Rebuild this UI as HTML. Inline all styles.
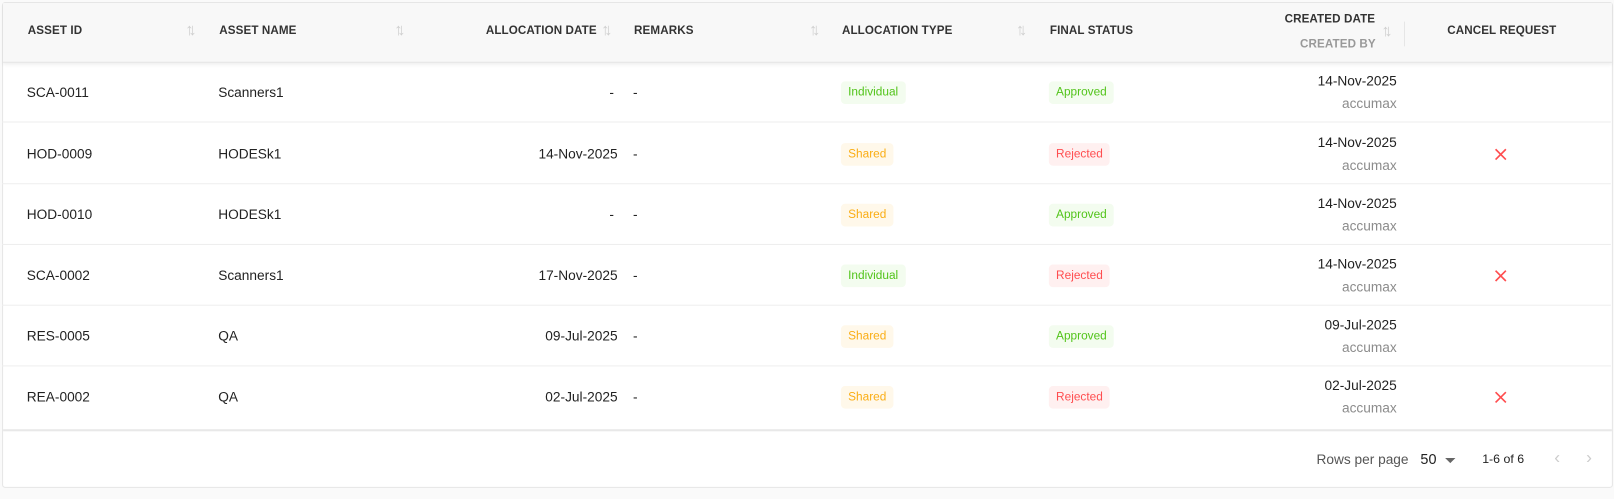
<!DOCTYPE html>
<html><head><meta charset="utf-8"><style>
*{margin:0;padding:0;box-sizing:border-box}
body{width:1614px;height:499px;background:#fafafa;font-family:"Liberation Sans",sans-serif;position:relative;overflow:hidden;color:#222}
#w{position:absolute;left:0;top:0;width:1568px;height:485px;transform:scale(1.0293);transform-origin:0 0}
.card{position:absolute;left:2px;top:2px;width:1565px;height:472px;background:#fff;border:1px solid #e6e6e6;border-radius:3px}
.hd{position:absolute;left:0;top:0;width:1563px;height:58px;background:#f8f8f8;border-bottom:1px solid #e4e4e4;box-shadow:0 2px 3px rgba(0,0,0,.06)}
.h{position:absolute;font-size:11.3px;font-weight:bold;color:#333;letter-spacing:.1px}
.s{position:absolute;font-size:16px;color:#cfcfcf;letter-spacing:-5px}
.row{position:absolute;left:0;width:1563px;height:59px;border-bottom:1px solid #eee}
.t{position:absolute;font-size:13.3px;color:#222}
.b{position:absolute;font-size:11.5px;padding:5px 7px;border-radius:4px;line-height:12px}
.gI{background:#f3fcef;color:#52c41a}
.sh{background:#fff8ea;color:#faad14}
.rj{background:#fff0f0;color:#ff4d4f}
.x{position:absolute;left:1449px;width:14px;height:14px}
.g{color:#8c8c8c}
.ft{position:absolute;left:0;top:414px;width:1563px;height:57px;border-top:2px solid #e8e8e8}
</style></head><body><div id="w">
<div class="card">
<div class="hd">
<div class="h" style="left:24px;top:21px">ASSET ID</div><div class="s" style="left:177px;top:18px">↑↓</div>
<div class="h" style="left:210px;top:21px">ASSET NAME</div><div class="s" style="left:380px;top:18px">↑↓</div>
<div class="h" style="left:469px;top:21px">ALLOCATION DATE</div><div class="s" style="left:581px;top:18px">↑↓</div>
<div class="h" style="left:613px;top:21px">REMARKS</div><div class="s" style="left:783px;top:18px">↑↓</div>
<div class="h" style="left:815px;top:21px">ALLOCATION TYPE</div><div class="s" style="left:984px;top:18px">↑↓</div>
<div class="h" style="left:1017px;top:21px">FINAL STATUS</div>
<div class="h" style="left:1245px;top:10px">CREATED DATE</div>
<div class="h" style="left:1260px;top:34px;color:#999">CREATED BY</div><div class="s" style="left:1339px;top:19px">↑↓</div>
<div style="position:absolute;left:1361px;top:18px;width:1px;height:24px;background:#e6e6e6"></div>
<div class="h" style="left:1403px;top:21px">CANCEL REQUEST</div>
</div>
<div class="ft">
<div class="t" style="left:1276px;top:20px;color:#555">Rows per page</div>
<div class="t" style="left:1377px;top:19px;font-size:14px">50</div>
<div style="position:absolute;left:1401px;top:26px;border-left:5px solid transparent;border-right:5px solid transparent;border-top:5px solid #666"></div>
<div class="t" style="left:1437px;top:20px;font-size:12px">1-6 of 6</div>
<div class="t" style="left:1507px;top:16px;color:#ccc;font-size:17px">‹</div>
<div class="t" style="left:1538px;top:16px;color:#ccc;font-size:17px">›</div>
</div>
</div>
<div style="position:absolute;left:2px;top:2px">
<div class="row" style="top:58px"><div class="t" style="left:24px;top:22px">SCA-0011</div><div class="t" style="left:210px;top:22px">Scanners1</div><div class="t" style="left:590px;top:22px">-</div><div class="t" style="left:613px;top:22px">-</div><div class="b gI" style="left:815px;top:19px">Individual</div><div class="b gI" style="left:1017px;top:19px">Approved</div><div class="t" style="left:1255px;top:11px;width:100px;text-align:right">14-Nov-2025</div><div class="t g" style="left:1255px;top:33px;width:100px;text-align:right">accumax</div></div>
<div class="row" style="top:118px"><div class="t" style="left:24px;top:22px">HOD-0009</div><div class="t" style="left:210px;top:22px">HODESk1</div><div class="t" style="left:495px;top:22px;width:103px;text-align:right">14-Nov-2025</div><div class="t" style="left:613px;top:22px">-</div><div class="b sh" style="left:815px;top:19px">Shared</div><div class="b rj" style="left:1017px;top:19px">Rejected</div><div class="t" style="left:1255px;top:11px;width:100px;text-align:right">14-Nov-2025</div><div class="t g" style="left:1255px;top:33px;width:100px;text-align:right">accumax</div><svg class="x" style="top:23px" viewBox="0 0 14 14"><path d="M2 2L12 12M12 2L2 12" stroke="#ff4d4f" stroke-width="1.6"/></svg></div>
<div class="row" style="top:177px"><div class="t" style="left:24px;top:22px">HOD-0010</div><div class="t" style="left:210px;top:22px">HODESk1</div><div class="t" style="left:590px;top:22px">-</div><div class="t" style="left:613px;top:22px">-</div><div class="b sh" style="left:815px;top:19px">Shared</div><div class="b gI" style="left:1017px;top:19px">Approved</div><div class="t" style="left:1255px;top:11px;width:100px;text-align:right">14-Nov-2025</div><div class="t g" style="left:1255px;top:33px;width:100px;text-align:right">accumax</div></div>
<div class="row" style="top:236px"><div class="t" style="left:24px;top:22px">SCA-0002</div><div class="t" style="left:210px;top:22px">Scanners1</div><div class="t" style="left:495px;top:22px;width:103px;text-align:right">17-Nov-2025</div><div class="t" style="left:613px;top:22px">-</div><div class="b gI" style="left:815px;top:19px">Individual</div><div class="b rj" style="left:1017px;top:19px">Rejected</div><div class="t" style="left:1255px;top:11px;width:100px;text-align:right">14-Nov-2025</div><div class="t g" style="left:1255px;top:33px;width:100px;text-align:right">accumax</div><svg class="x" style="top:23px" viewBox="0 0 14 14"><path d="M2 2L12 12M12 2L2 12" stroke="#ff4d4f" stroke-width="1.6"/></svg></div>
<div class="row" style="top:295px"><div class="t" style="left:24px;top:22px">RES-0005</div><div class="t" style="left:210px;top:22px">QA</div><div class="t" style="left:495px;top:22px;width:103px;text-align:right">09-Jul-2025</div><div class="t" style="left:613px;top:22px">-</div><div class="b sh" style="left:815px;top:19px">Shared</div><div class="b gI" style="left:1017px;top:19px">Approved</div><div class="t" style="left:1255px;top:11px;width:100px;text-align:right">09-Jul-2025</div><div class="t g" style="left:1255px;top:33px;width:100px;text-align:right">accumax</div></div>
<div class="row" style="top:354px;border-bottom:none"><div class="t" style="left:24px;top:22px">REA-0002</div><div class="t" style="left:210px;top:22px">QA</div><div class="t" style="left:495px;top:22px;width:103px;text-align:right">02-Jul-2025</div><div class="t" style="left:613px;top:22px">-</div><div class="b sh" style="left:815px;top:19px">Shared</div><div class="b rj" style="left:1017px;top:19px">Rejected</div><div class="t" style="left:1255px;top:11px;width:100px;text-align:right">02-Jul-2025</div><div class="t g" style="left:1255px;top:33px;width:100px;text-align:right">accumax</div><svg class="x" style="top:23px" viewBox="0 0 14 14"><path d="M2 2L12 12M12 2L2 12" stroke="#ff4d4f" stroke-width="1.6"/></svg></div>
</div>
</div></body></html>
